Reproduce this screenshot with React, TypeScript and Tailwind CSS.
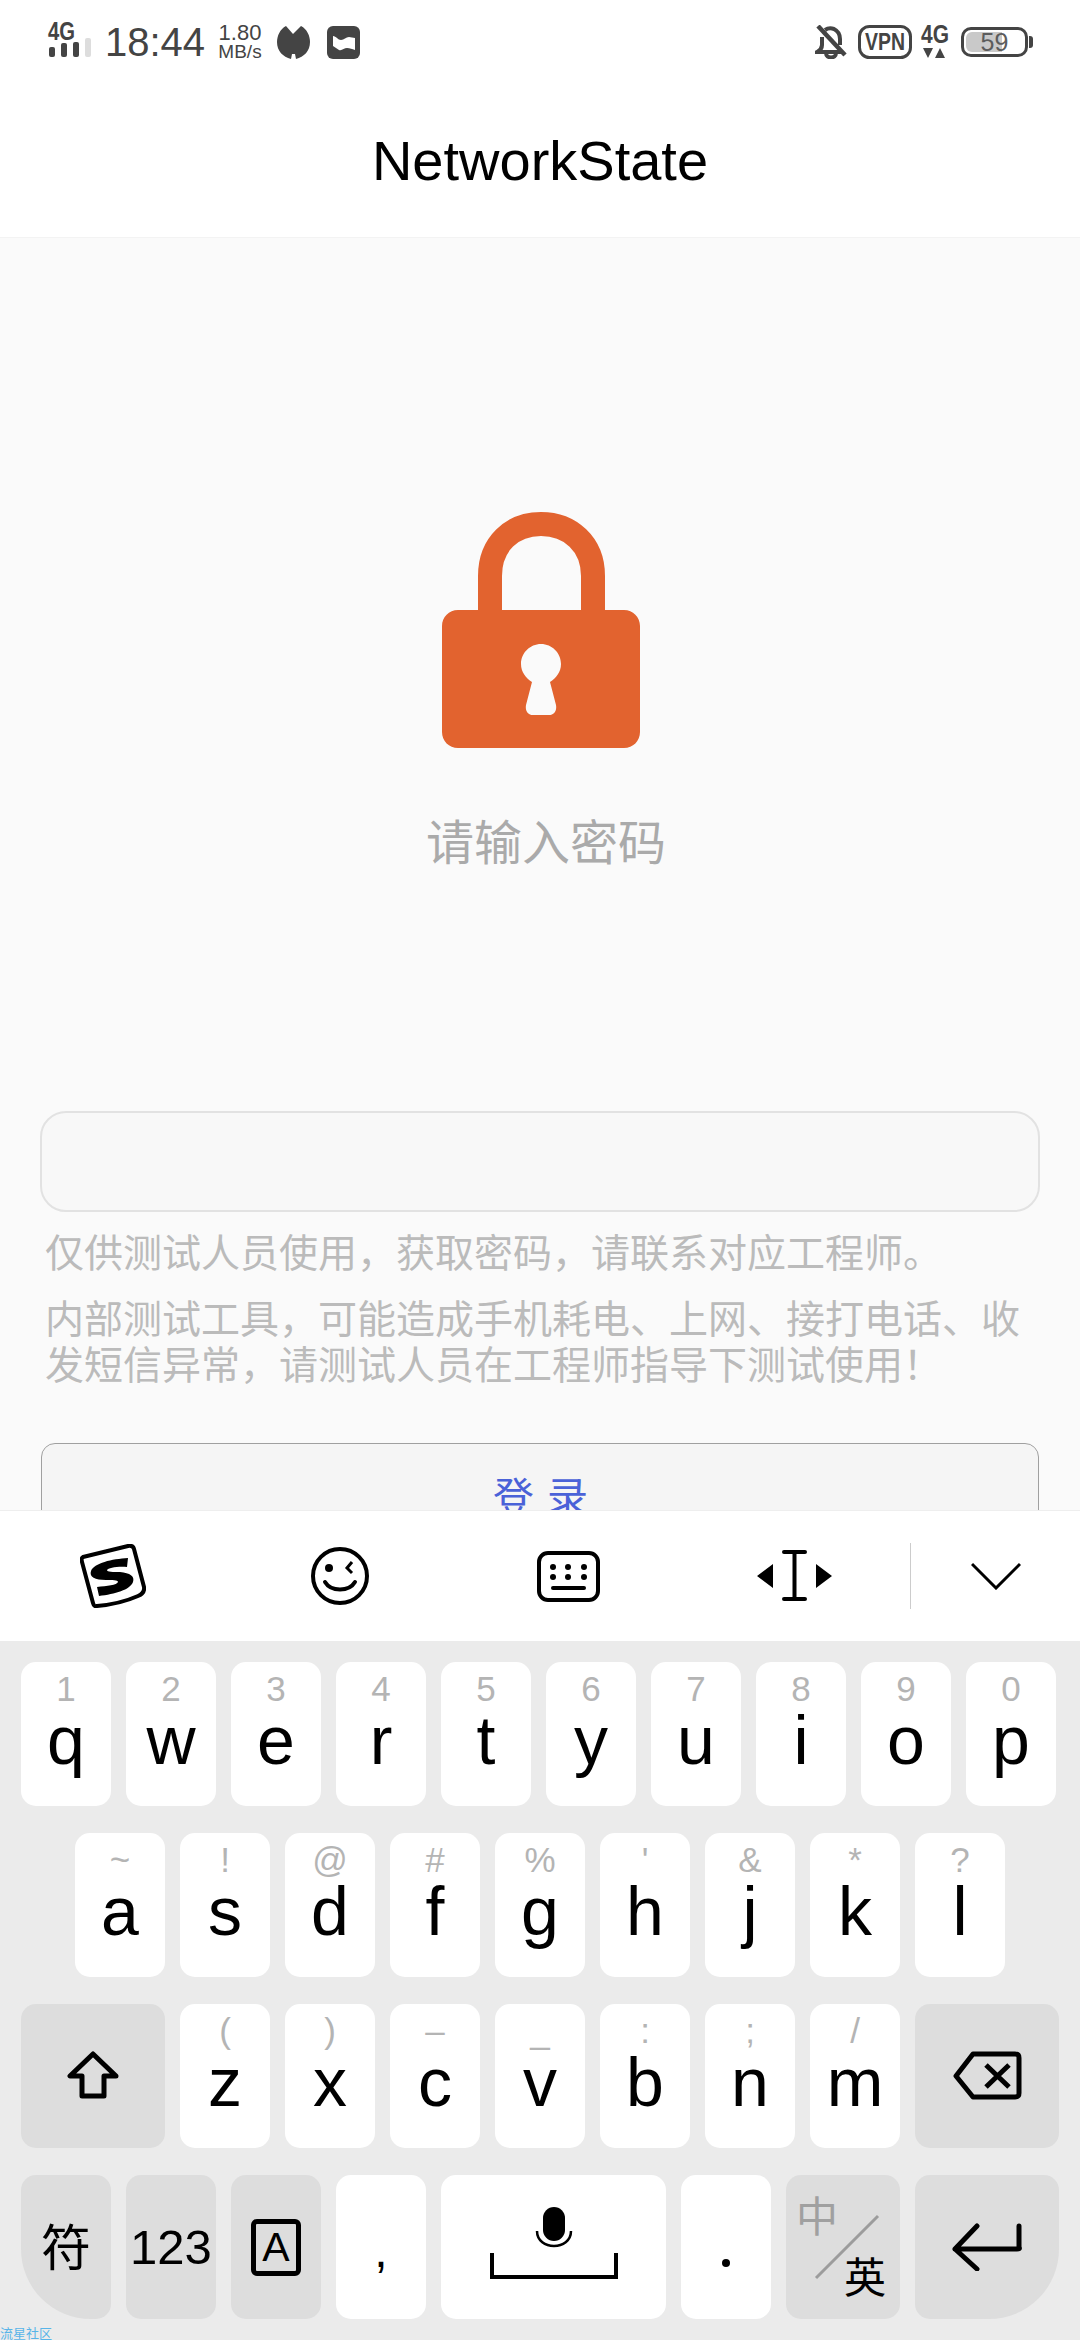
import React from 'react';

const row1 = [['1', 'q'], ['2', 'w'], ['3', 'e'], ['4', 'r'], ['5', 't'], ['6', 'y'], ['7', 'u'], ['8', 'i'], ['9', 'o'], ['0', 'p']];
const row2 = [['~', 'a'], ['!', 's'], ['@', 'd'], ['#', 'f'], ['%', 'g'], ["'", 'h'], ['&', 'j'], ['*', 'k'], ['?', 'l']];
const row3 = [['(', 'z'], [')', 'x'], ['–', 'c'], ['_', 'v'], [':', 'b'], [';', 'n'], ['/', 'm']];

function LetterKey({ hint, letter }: { hint: string; letter: string }) {
  return (
    <div className="w-[90px] h-[144px] bg-white rounded-[15px] flex flex-col items-center shrink-0">
      <div className="h-[44px] text-[35px] leading-[54px] text-[#b4b4b4]">{hint}</div>
      <div className="h-[68px] text-[68px] leading-[68px] text-black">{letter}</div>
    </div>
  );
}

function StatusBar() {
  return (
    <div className="h-[84px] flex items-center pl-[48px] text-[#444]">
      <svg width="43" height="40" viewBox="0 0 43 40" className="shrink-0 overflow-visible">
        <text x="0" y="18" fontSize="25" fontWeight="700" fill="#444" textLength="27" lengthAdjust="spacingAndGlyphs">4G</text>
        <rect x="1" y="25" width="6" height="10" rx="2" fill="#444" />
        <rect x="13" y="21" width="6" height="14" rx="2" fill="#444" />
        <rect x="25" y="20" width="6" height="15" rx="2" fill="#444" />
        <rect x="37" y="16" width="6" height="19" rx="2" fill="#ddd" />
      </svg>
      <div className="ml-[14px] text-[40px] leading-[44px] w-[100px] shrink-0">18:44</div>
      <div className="ml-[13px] w-[44px] flex flex-col items-center text-[#444] shrink-0 -mt-[1px]">
        <span className="text-[22px] leading-[20px]">1.80</span>
        <span className="text-[19px] leading-[17px]">MB/s</span>
      </div>
      <svg width="33" height="33" viewBox="0 0 33 33" className="ml-[15px] shrink-0">
        <path d="M9 0 L16 8 L24 0 C30 3 33 10 33 16 C33 25 27 31 19 33 L18 28 L15 28 L14 33 C6 31 0 25 0 16 C0 10 3 3 9 0 Z" fill="#444" />
      </svg>
      <svg width="33" height="33" viewBox="0 0 33 33" className="ml-[17px] shrink-0">
        <rect width="33" height="33" rx="6" fill="#444" />
        <path d="M6 10 C9 10 11 14 14 14 C17 14 19 11 22 11 C24 11 26 12 28 12 L28 24 C25 23 23 22 20 22 C17 22 15 25 12 24 C10 23 8 21 6 20 Z" fill="#fff" />
      </svg>

      <svg width="32" height="34" viewBox="0 0 32 34" className="ml-[455px] shrink-0" fill="none" stroke="#444" strokeWidth="4">
        <path d="M7 12 V20 C7 24 5 25 2 27 H26" />
        <path d="M10 5 C13 3 16 3 19 4 C23 6 25 10 25 14 V20" />
        <path d="M11 28 C11 34 21 34 21 28" />
        <path d="M3 1 L30 30" strokeWidth="4.500" />
      </svg>
      <svg width="54" height="34" viewBox="0 0 54 34" className="ml-[11px] shrink-0 overflow-visible">
        <rect x="1.500" y="1.500" width="51" height="31" rx="10" fill="none" stroke="#444" strokeWidth="3" />
        <text x="7" y="25" fontSize="24" fontWeight="700" fill="#444" textLength="40" lengthAdjust="spacingAndGlyphs">VPN</text>
      </svg>
      <svg width="30" height="34" viewBox="0 0 30 34" className="ml-[8px] shrink-0 overflow-visible">
        <text x="1" y="18" fontSize="25" fontWeight="700" fill="#444" textLength="28" lengthAdjust="spacingAndGlyphs">4G</text>
        <path d="M3 23 H13 L8 33 Z M15 33 L20 23 L25 33 Z" fill="#444" />
      </svg>
      <div className="ml-[11px] w-[67px] h-[30px] border-[3px] border-[#444] rounded-[10px] relative shrink-0 flex items-center justify-center text-[25px] leading-none text-[#5c5c5c]">
        <div className="absolute left-[2px] top-[2px] bottom-[2px] w-[36px] bg-[#c9c9c9] rounded-l-[6px]" />
        <span className="relative">59</span>
      </div>
      <div className="ml-[1px] w-[4px] h-[12px] bg-[#444] rounded-r-[3px] shrink-0" />
    </div>
  );
}

function LockIcon() {
  return (
    <svg width="198" height="236" viewBox="0 0 198 236" className="block">
      <path d="M48 110 V64 C48 32 70 12 99 12 C128 12 151 32 151 64 V110" fill="none" stroke="#e2632f" strokeWidth="24" />
      <path fillRule="evenodd" fill="#e2632f" d="M16 98 H182 C191 98 198 105 198 114 V220 C198 229 191 236 182 236 H16 C7 236 0 229 0 220 V114 C0 105 7 98 16 98 Z M99 132 C88 132 79 141 79 152 C79 160 84 166 90 170 L84 193 C83 199 86 203 91 203 H107 C112 203 115 199 114 193 L108 170 C114 166 119 160 119 152 C119 141 110 132 99 132 Z" />
    </svg>
  );
}

function Toolbar() {
  return (
    <div className="h-[131px] bg-white flex items-center shrink-0 border-t border-[#eeeeee]">
      <svg width="66" height="64" viewBox="0 0 66 64" className="ml-[80px] shrink-0" fill="none">
        <path d="M3 13 L48 2 Q53 1 54 5 L64 43 Q65 49 58 52 Q40 60 17 62 Q14 63 13 59 L2 18 Q1 14 3 13 Z" stroke="#000" strokeWidth="4" />
        <path fill="#000" d="M48 14 L47 23 C38 22 28 24 27 26 C27 28 33 28 40 28 C50 29 55 32 53 38 C50 46 35 50 19 52 L17 43 C27 42 37 41 38 38 C38 36 32 36 26 36 C15 36 9 33 11 27 C14 19 32 15 48 14 Z" />
      </svg>
      <svg width="58" height="60" viewBox="0 0 58 60" className="ml-[165px] shrink-0" fill="none" stroke="#000">
        <circle cx="29" cy="30" r="27" strokeWidth="4" />
        <circle cx="18" cy="22" r="4" fill="#000" stroke="none" />
        <path d="M41 16 L36 22 L41 27" strokeWidth="3" />
        <path d="M14 36 C20 46 38 46 44 36" strokeWidth="4" strokeLinecap="round" />
      </svg>
      <svg width="63" height="51" viewBox="0 0 63 51" className="ml-[168px] shrink-0" fill="none">
        <rect x="2" y="2" width="59" height="47" rx="9" stroke="#000" strokeWidth="4" />
        <g fill="#000">
          <circle cx="16" cy="16" r="3" /><circle cx="31" cy="16" r="3" /><circle cx="47" cy="16" r="3" />
          <circle cx="16" cy="26" r="3" /><circle cx="31" cy="26" r="3" /><circle cx="47" cy="26" r="3" />
          <rect x="14" y="35" width="35" height="4" rx="2" />
        </g>
      </svg>
      <svg width="75" height="52" viewBox="0 0 75 52" className="ml-[157px] shrink-0">
        <path d="M27 2 H48 M37.500 2 V49 M27 49 H48" stroke="#000" strokeWidth="4" strokeLinecap="round" fill="none" />
        <path d="M16 14 V38 L0 26 Z M59 14 V38 L75 26 Z" fill="#000" />
      </svg>
      <div className="ml-[78px] w-px h-[66px] bg-[#cccccc] shrink-0" />
      <svg width="50" height="28" viewBox="0 0 50 28" className="ml-[60px] shrink-0" fill="none">
        <path d="M1 2 L25 26 L49 2" stroke="#000" strokeWidth="3" />
      </svg>
    </div>
  );
}

function Keyboard() {
  return (
    <div className="flex-1 bg-[#ebebeb] pt-[21px] flex flex-col gap-[27px] text-black relative">
      <div className="flex gap-[15px] pl-[21px]">
        {row1.map(([h, l]) => <LetterKey key={l} hint={h} letter={l} />)}
      </div>
      <div className="flex gap-[15px] pl-[75px]">
        {row2.map(([h, l]) => <LetterKey key={l} hint={h} letter={l} />)}
      </div>
      <div className="flex gap-[15px] pl-[21px]">
        <div className="w-[144px] h-[144px] bg-[#dddddd] rounded-[15px] flex items-center justify-center shrink-0">
          <svg width="52" height="48" viewBox="0 0 52 48" fill="none" stroke="#000" strokeWidth="5" strokeLinejoin="round" className="-mt-[2px]">
            <path d="M26 3 L3 25 H15 V45 H37 V25 H49 Z" />
          </svg>
        </div>
        {row3.map(([h, l]) => <LetterKey key={l} hint={h} letter={l} />)}
        <div className="w-[144px] h-[144px] bg-[#dddddd] rounded-[15px] flex items-center justify-center shrink-0">
          <svg width="69" height="49" viewBox="0 0 69 49" fill="none" stroke="#000" strokeWidth="5" strokeLinejoin="round" className="-mt-[2px]">
            <path d="M20 3 H62 C65 3 66 4 66 7 V42 C66 45 65 46 62 46 H20 L3 25 Z" />
            <path d="M33 14 L56 36 M56 14 L33 36" />
          </svg>
        </div>
      </div>
      <div className="flex gap-[15px] pl-[21px]">
        <div className="w-[90px] h-[144px] bg-[#dddddd] rounded-[15px] rounded-bl-[70px] flex items-center justify-center text-[50px] pt-[4px] shrink-0">符</div>
        <div className="w-[90px] h-[144px] bg-[#dddddd] rounded-[15px] flex items-center justify-center text-[49px] pt-[2px] shrink-0">123</div>
        <div className="w-[90px] h-[144px] bg-[#dddddd] rounded-[15px] flex items-center justify-center shrink-0">
          <div className="w-[50px] h-[57px] border-[5px] border-black rounded-[6px] flex items-center justify-center text-[41px] leading-none">A</div>
        </div>
        <div className="w-[90px] h-[144px] bg-white rounded-[15px] flex justify-center text-[48px] leading-[48px] pt-[52px] shrink-0">,</div>
        <div className="w-[225px] h-[144px] bg-white rounded-[15px] flex flex-col items-center pt-[32px] shrink-0">
          <svg width="128" height="72" viewBox="0 0 128 72" fill="none" stroke="#000">
            <rect x="53" y="0" width="22" height="34" rx="11" fill="#000" stroke="none" />
            <path d="M47 24 C47 44 81 44 81 24" strokeWidth="2.500" />
            <path d="M2 46 V70 H126 V46" strokeWidth="4" />
          </svg>
        </div>
        <div className="w-[90px] h-[144px] bg-white rounded-[15px] flex items-center justify-center shrink-0">
          <div className="w-[8px] h-[8px] rounded-full bg-black mt-[32px]" />
        </div>
        <div className="w-[114px] h-[144px] bg-[#dddddd] rounded-[15px] relative shrink-0 flex flex-col">
          <span className="ml-[10px] mt-[19px] text-[42px] leading-[48px] text-[#a0a0a0]">中</span>
          <span className="self-end mr-[14px] mt-[13px] text-[42px] leading-[48px]">英</span>
          <svg width="66" height="66" viewBox="0 0 66 66" className="absolute left-[28px] top-[39px]" fill="none">
            <path d="M64 2 L2 64" stroke="#9c9c9c" strokeWidth="3" />
          </svg>
        </div>
        <div className="w-[144px] h-[144px] bg-[#dddddd] rounded-[15px] rounded-br-[70px] flex items-center justify-center shrink-0">
          <svg width="72" height="48" viewBox="0 0 72 48" fill="none" stroke="#000" strokeWidth="5" strokeLinecap="round" strokeLinejoin="round" className="-mt-[1px]">
            <path d="M68 3 V24 C69 26 68 26 66 26 H4 M26 3 L4 26 L26 46" />
          </svg>
        </div>
      </div>
      <div className="absolute left-0 bottom-0 text-[13px] leading-[13px] text-[#58b4e8]">流星社区</div>
    </div>
  );
}

export default function App() {
  return (
    <div className="w-[1080px] h-[2340px] flex flex-col overflow-hidden bg-white [font-family:'Liberation_Sans','Noto_Sans_CJK_SC',sans-serif]">
      <StatusBar />
      <div className="h-[154px] flex items-center justify-center text-[56px] leading-none text-black shrink-0 border-b border-[#f3f3f3]">
        NetworkState
      </div>

      <div className="h-[1272px] bg-[#fafafa] overflow-hidden shrink-0">
        <div className="flex justify-center pt-[274px] pl-[2px]">
          <LockIcon />
        </div>
        <div className="mt-[66px] text-center text-[48px] leading-[60px] text-[#aaaaaa] pl-[12px]">请输入密码</div>

        <div className="mt-[237px] mx-[40px] h-[101px] bg-[#f8f8f8] border-2 border-[#e2e2e2] rounded-[26px]" />

        <p className="mt-[19px] pl-[45px] text-[39px] leading-[46px] text-[#bbbbbb]">仅供测试人员使用，获取密码，请联系对应工程师。</p>
        <p className="mt-[20px] pl-[45px] pr-[40px] text-[39px] leading-[46px] text-[#bbbbbb]">内部测试工具，可能造成手机耗电、上网、接打电话、收发短信异常，请测试人员在工程师指导下测试使用！</p>

        <div className="mt-[54px] mx-[41px] h-[112px] bg-[#f5f5f5] border border-[#a0a0a0] rounded-[14px] flex items-center justify-center pl-[14px] text-[41px] tracking-[13px] text-[#4a62d8]">
          登录
        </div>
      </div>

      <Toolbar />
      <Keyboard />
    </div>
  );
}
